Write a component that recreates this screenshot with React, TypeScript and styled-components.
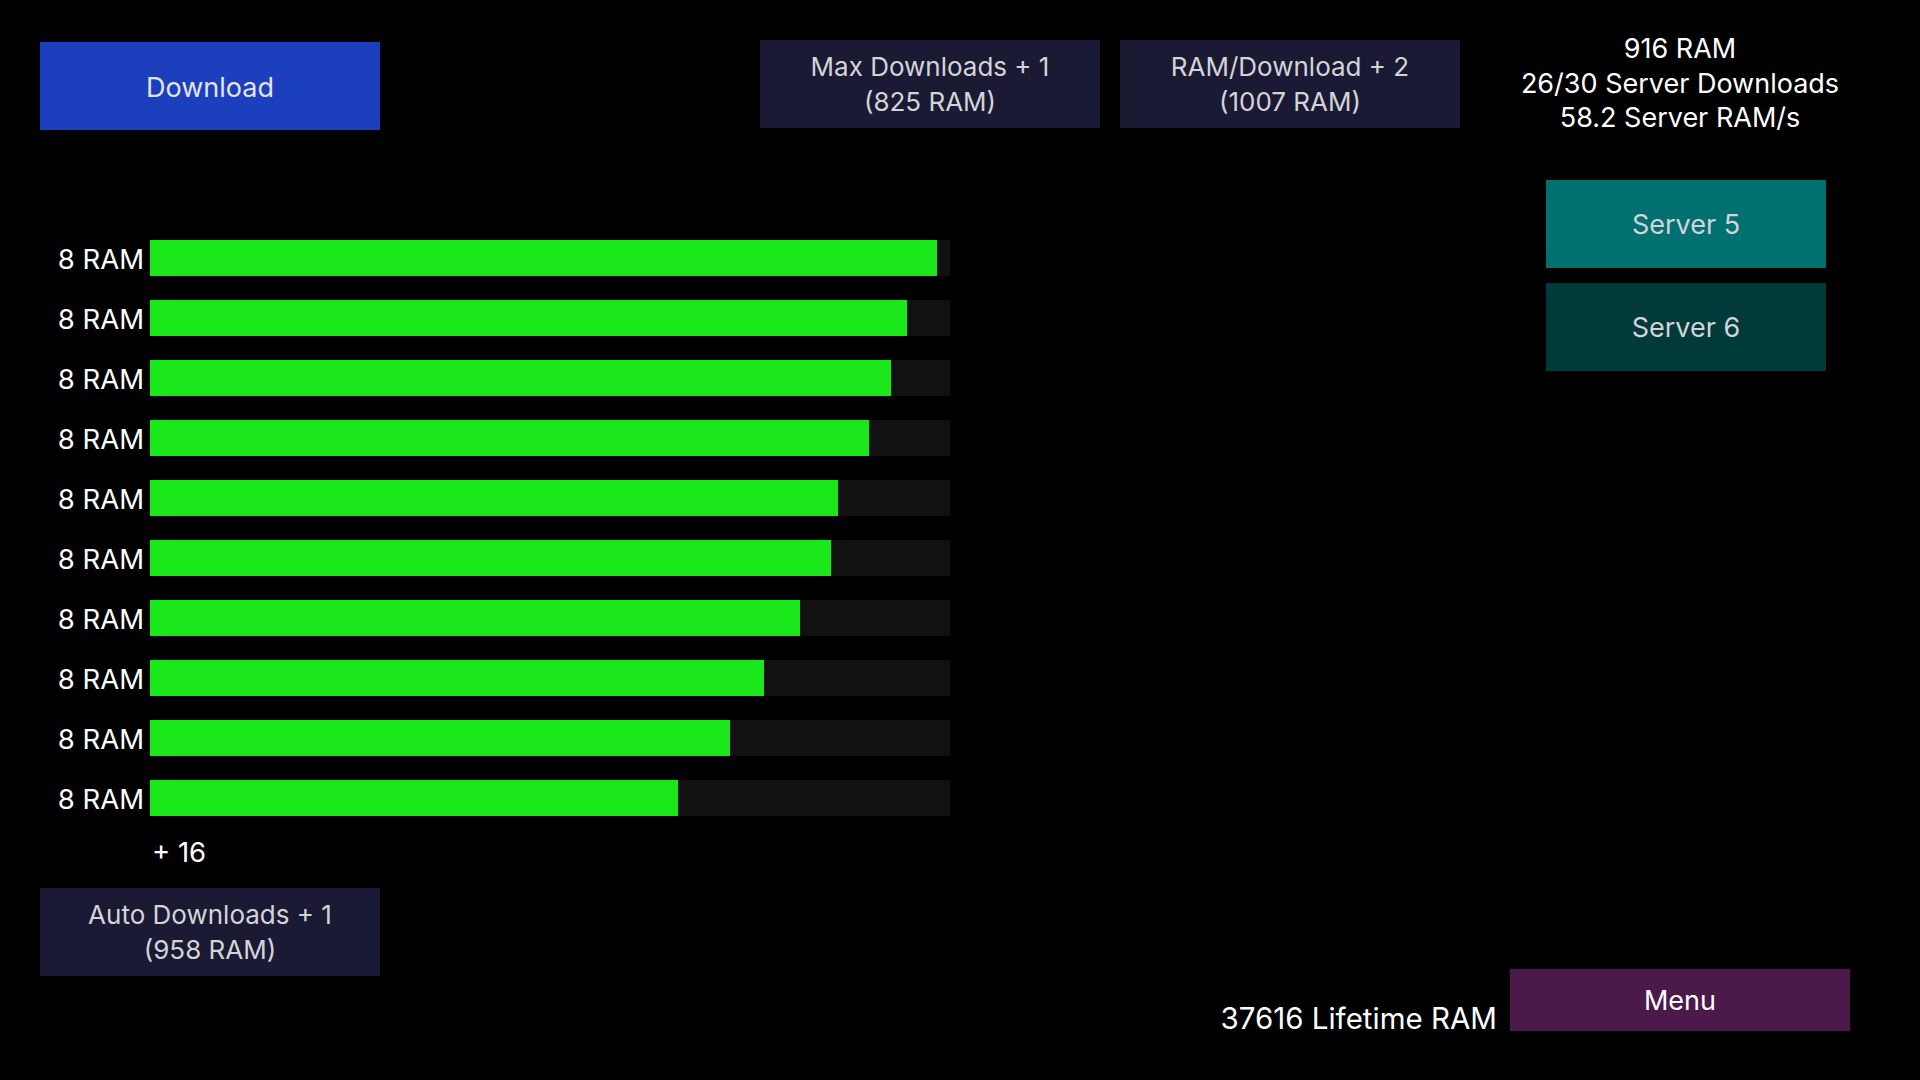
import styled, { createGlobalStyle } from 'styled-components';

const GlobalStyle = createGlobalStyle`
  html, body {
    margin: 0;
    padding: 0;
    background: #000;
  }
  body {
    font-family: Inter, "Noto Sans", "Liberation Sans", sans-serif;
    color: #fff;
  }
`;

const Screen = styled.div`
  box-sizing: border-box;
  width: 1920px;
  height: 1080px;
  padding: 40px 70px 49px 40px;
  display: flex;
  flex-direction: column;
  background: #000;
  overflow: hidden;
`;

const TopBar = styled.div`
  display: flex;
  align-items: flex-start;
  height: 90px;
`;

const Button = styled.div<{ $bg: string; $w?: number; $h?: number; $size?: number }>`
  box-sizing: border-box;
  width: ${p => p.$w ?? 340}px;
  height: ${p => p.$h ?? 88}px;
  background: ${p => p.$bg};
  color: #d4d4d8;
  font-size: ${p => p.$size ?? 26}px;
  line-height: 35px;
  display: flex;
  flex-direction: column;
  align-items: center;
  justify-content: center;
  text-align: center;
  flex-shrink: 0;
`;

const DownloadButton = styled(Button)`
  margin-top: 2px;
  padding-top: 2px;
  color: #e4e4ea;
`;

const Upgrades = styled.div`
  display: flex;
  gap: 20px;
  margin-left: 380px;
`;

const Stats = styled.div`
  width: 340px;
  margin-left: auto;
  margin-top: -8px;
  text-align: center;
  font-size: 27px;
  line-height: 34.5px;
  color: #fff;
`;

const Body = styled.div`
  flex: 1;
  display: grid;
  grid-template-columns: 910px 1fr 340px;
  grid-template-rows: 1fr auto;
`;

const LeftColumn = styled.div`
  grid-column: 1;
  grid-row: 1 / span 2;
  display: flex;
  flex-direction: column;
  padding-top: 110px;
`;

const BarList = styled.div`
  display: flex;
  flex-direction: column;
  gap: 24px;
`;

const BarRow = styled.div`
  display: flex;
  align-items: center;
  height: 36px;
`;

const BarLabel = styled.div`
  width: 104px;
  padding: 2px 6px 0 0;
  text-align: right;
  font-size: 27.5px;
  color: #fff;
  white-space: nowrap;
`;

const Track = styled.div`
  width: 800px;
  height: 36px;
  background: #111111;
`;

const Fill = styled.div`
  height: 100%;
  background: #1be81b;
`;

const MoreCount = styled.div`
  margin: 19px 0 0 112px;
  font-size: 27.5px;
  line-height: 34px;
  color: #fff;
`;

const AutoButton = styled(Button)`
  margin-top: 19px;
`;

const ServerList = styled.div`
  grid-column: 3;
  grid-row: 1;
  display: flex;
  flex-direction: column;
  gap: 15px;
  padding: 50px 0 0 36px;
`;

const Lifetime = styled.div`
  grid-column: 2;
  grid-row: 2;
  justify-self: end;
  align-self: end;
  margin: 0 13px -4px 0;
  font-size: 29.5px;
  line-height: 34px;
  white-space: nowrap;
  color: #fff;
`;

const MenuButton = styled(Button)`
  grid-column: 3;
  grid-row: 2;
  color: #fff;
`;

const fills = [787, 757, 741, 719, 688, 681, 650, 614, 580, 528];

export default function App() {
  return (
    <>
      <GlobalStyle />
      <Screen>
        <TopBar>
          <DownloadButton $bg="#1b3fbd" $size={27}>Download</DownloadButton>
          <Upgrades>
            <Button $bg="#1b1a34">
              <span>Max Downloads + 1</span>
              <span>(825 RAM)</span>
            </Button>
            <Button $bg="#1b1a34">
              <span>RAM/Download + 2</span>
              <span>(1007 RAM)</span>
            </Button>
          </Upgrades>
          <Stats>
            <div>916 RAM</div>
            <div>26/30 Server Downloads</div>
            <div>58.2 Server RAM/s</div>
          </Stats>
        </TopBar>
        <Body>
          <LeftColumn>
            <BarList>
              {fills.map((w, i) => (
                <BarRow key={i}>
                  <BarLabel>8 RAM</BarLabel>
                  <Track>
                    <Fill style={{ width: w }} />
                  </Track>
                </BarRow>
              ))}
            </BarList>
            <MoreCount>+ 16</MoreCount>
            <AutoButton $bg="#1b1a34">
              <span>Auto Downloads + 1</span>
              <span>(958 RAM)</span>
            </AutoButton>
          </LeftColumn>
          <ServerList>
            <Button $bg="#007070" $w={280} $size={27}>Server 5</Button>
            <Button $bg="#003a3a" $w={280} $size={27}>Server 6</Button>
          </ServerList>
          <Lifetime>37616 Lifetime RAM</Lifetime>
          <MenuButton $bg="#4b1a4b" $h={62} $size={27}>Menu</MenuButton>
        </Body>
      </Screen>
    </>
  );
}
